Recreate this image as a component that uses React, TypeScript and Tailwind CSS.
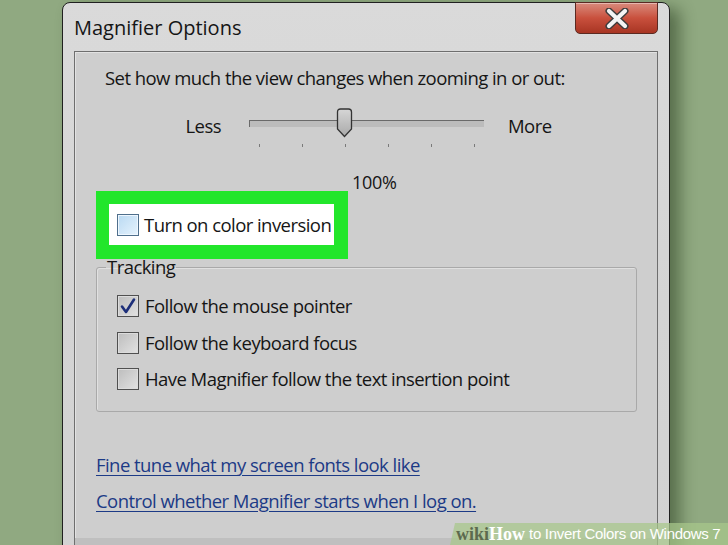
import React from "react";

const FONT = { fontFamily: '"Open Sans", "Noto Sans", sans-serif' };
const TXT = "text-[18.5px] tracking-[-0.55px] text-[#151515] whitespace-nowrap";

function Box({ checked = false, blue = false }: { checked?: boolean; blue?: boolean }) {
  return (
    <div
      className={
        "relative flex h-[22px] w-[22px] shrink-0 items-center justify-center border " +
        (blue
          ? "border-[#4f6f8c] bg-gradient-to-br from-[#b9d9f2] to-[#e6f3fd] shadow-[inset_0_0_0_1px_#eef7ff]"
          : "border-[#505050] bg-gradient-to-br from-[#bdbdbd] to-[#e2e2e2] shadow-[inset_0_0_0_1px_#dcdcdc]")
      }
    >
      {checked && (
        <svg width="18" height="18" viewBox="0 0 18 18">
          <path d="M3 9.5 L7 15 L15 2.5" fill="none" stroke="#1d2f7a" strokeWidth="2.6" strokeLinecap="round" strokeLinejoin="round" />
        </svg>
      )}
    </div>
  );
}

function Row({ label, checked = false }: { label: string; checked?: boolean }) {
  return (
    <div className="flex h-[36.5px] items-center gap-[6px] pl-[20px]">
      <Box checked={checked} />
      <span className={TXT + " leading-[24px]"}>{label}</span>
    </div>
  );
}

export default function App() {
  return (
    <div className="relative h-[545px] w-[728px] overflow-hidden bg-[#90a981] pl-[62px] pt-[2px]" style={FONT}>
      <div className="flex h-[600px] w-[608px] flex-col rounded-t-[8px] border border-[#202020] bg-gradient-to-b from-[#dadada] via-[#d4d4d4] to-[#d2d2d2] shadow-[10px_6px_16px_rgba(20,40,10,0.45)]">
        {/* title bar */}
        <div className="flex h-[48px] items-start justify-between">
          <div className="pl-[11px] pt-[12px] text-[20px] leading-[26px] text-[#151515]">Magnifier Options</div>
          <div className="-mt-[1px] mr-[11px] flex h-[32px] w-[83px] items-center justify-center rounded-b-[5px] border border-[#5b2a22] bg-gradient-to-b from-[#d88a7c] via-[#c9503d] to-[#a83523] shadow-[inset_0_1px_0_rgba(255,255,255,0.4)]">
            <svg width="24" height="21" viewBox="0 0 24 21">
              <path d="M4 3 L20 18 M20 3 L4 18" stroke="#3c3c3c" strokeWidth="7" strokeLinecap="round" />
              <path d="M4 3 L20 18 M20 3 L4 18" stroke="#f4f4f4" strokeWidth="4.2" strokeLinecap="round" />
            </svg>
          </div>
        </div>

        {/* panel */}
        <div className="mx-[11px] flex flex-1 flex-col border border-[#6e6e6e] bg-[#cecece] shadow-[inset_1px_1px_0_#e2e2e2]">
          <div className={"mt-[14px] pl-[30px] leading-[24px] " + TXT}>
            Set how much the view changes when zooming in or out:
          </div>

          {/* slider row */}
          <div className="mt-[18px] flex items-start">
            <div className={"w-[174px] pr-[28px] pt-[3px] text-right leading-[30px] " + TXT}>Less</div>
            <div className="flex w-[235px] flex-col">
              <div className="relative h-[30px]">
                <div className="absolute left-0 right-0 top-[12px] h-[7px] border-l border-t border-[#6a6a6a] bg-[#bcbcbc]" />
                <svg className="absolute left-[87px] top-0" width="17" height="30" viewBox="0 0 17 30">
                  <defs>
                    <linearGradient id="th" x1="0" y1="0" x2="0" y2="1">
                      <stop offset="0" stopColor="#d6d6d6" />
                      <stop offset="1" stopColor="#a9a9a9" />
                    </linearGradient>
                  </defs>
                  <path d="M1.5 4 Q1.5 1 4.5 1 L12.5 1 Q15.5 1 15.5 4 L15.5 21 L8.5 28.5 L1.5 21 Z" fill="url(#th)" stroke="#333" strokeWidth="1.3" />
                </svg>
              </div>
              <div className="mt-[6px] flex justify-between pl-[10px] pr-[9px]">
                {[0, 1, 2, 3, 4, 5].map((i) => (
                  <div key={i} className="h-[3px] w-[1px] bg-[#7a7a7a]" />
                ))}
              </div>
            </div>
            <div className={"ml-[24px] pt-[3px] leading-[30px] " + TXT}>More</div>
          </div>

          <div className="ml-[277px] mt-[26px] text-[18px] leading-[19px] tracking-[-0.3px] text-[#151515]">100%</div>

          {/* highlight */}
          <div className="-mt-[1px] ml-[21px] h-[68px] w-[252px] bg-[#22e62b] pb-[14px] pl-[13px] pr-[14px] pt-[13px]">
            <div className="flex h-[41px] items-center gap-[5px] bg-white pl-[8px]">
              <Box blue />
              <span className={TXT + " leading-[24px]"}>Turn on color inversion</span>
            </div>
          </div>

          {/* tracking */}
          <fieldset className="-mt-[2px] ml-[21px] w-[541px] rounded-[3px] border border-[#a9a9a9] pb-[13px] shadow-[inset_1px_1px_0_#e0e0e0]">
            <legend className={"ml-[9px] px-[1px] leading-[20px] " + TXT}>Tracking</legend>
            <div className="mt-[11px]">
              <Row label="Follow the mouse pointer" checked />
              <Row label="Follow the keyboard focus" />
              <Row label="Have Magnifier follow the text insertion point" />
            </div>
          </fieldset>

          <div className="ml-[21px] mt-[41px] leading-[24px]">
            <span className={TXT + " !text-[#1c3a86] underline decoration-1 underline-offset-[3px]"}>Fine tune what my screen fonts look like</span>
          </div>
          <div className="ml-[21px] mt-[11px] leading-[24px]">
            <span className={TXT + " !text-[#1c3a86] underline decoration-1 underline-offset-[3px]"}>Control whether Magnifier starts when I log on.</span>
          </div>
          <div className="mt-[24px] flex-1 bg-[#bfbfbf]" />
        </div>
      </div>

      {/* watermark */}
      <div className="absolute bottom-0 right-0 flex h-[22px] w-[278px] items-center whitespace-nowrap bg-[rgba(168,200,138,0.72)] pl-[6px] [clip-path:polygon(5px_0,100%_0,100%_100%,0_100%)]">
        <span className="text-[18px] font-bold leading-[22px] text-[#5c6a4e]" style={{ fontFamily: '"Liberation Serif", serif' }}>wiki</span>
        <span className="text-[18px] font-bold leading-[22px] text-white" style={{ fontFamily: '"Liberation Serif", serif' }}>How</span>
        <span className="ml-[4px] text-[15px] leading-[22px] tracking-[-0.3px] text-white" style={{ fontFamily: '"Liberation Sans", Arial, sans-serif' }}>to Invert Colors on Windows 7</span>
      </div>
    </div>
  );
}
